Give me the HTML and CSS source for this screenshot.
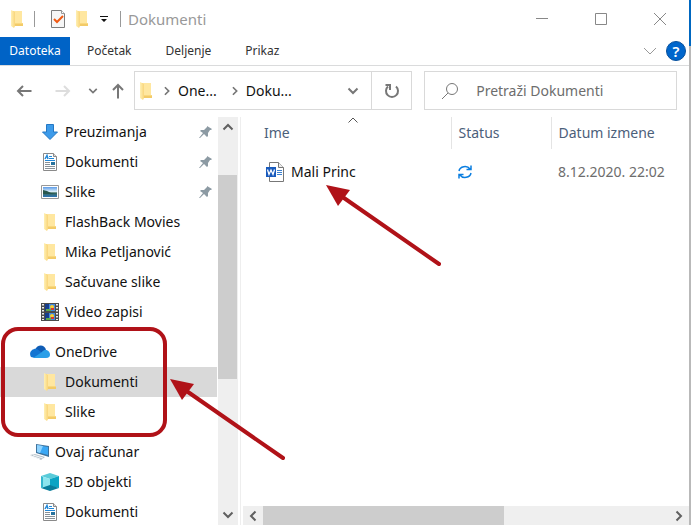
FILE: index.html
```html
<!DOCTYPE html>
<html lang="sr-Latn">
<head>
<meta charset="utf-8">
<meta name="viewport" content="width=device-width, initial-scale=1">
<title>Dokumenti</title>
<link rel="stylesheet" href="styles.css">
</head>
<body>
<svg class="sprite" aria-hidden="true">
  <defs>
    <linearGradient id="gold" x2="1" y2="0"><stop stop-color="#fff0b4"/><stop offset="1" stop-color="#f9d57a"/></linearGradient>
    <linearGradient id="sky" x2="0" y2="1"><stop stop-color="#5b9be8"/><stop offset=".45" stop-color="#d8ecf8"/><stop offset=".6" stop-color="#3c6b5c"/><stop offset="1" stop-color="#2b75b9"/></linearGradient>
  </defs>
  <symbol id="folder" viewBox="0 0 18 18"><path fill="#f9d87f" d="M4 1h10v12h1v3H5z"/><path fill="#ffe7a0" d="M6 1h8v12H6z"/><path fill="url(#gold)" d="M3 0l4 2v14l-1 2-3-2z"/><path fill="#f3cb68" d="M7 14h8v2H7z"/></symbol>
  <symbol id="down" viewBox="0 0 18 18"><path fill="#3d9bea" stroke="#2578c4" d="M5.500 1.500h7V9h4L9 16.500 1.500 9h4z"/></symbol>
  <symbol id="doc" viewBox="0 0 18 18"><path fill="#fff" stroke="#8a8a8a" d="M2.500.5h10l3 3v14h-13z"/><path fill="#ddd" stroke="#8a8a8a" d="M12.500.5v3h3"/><path stroke="#2188d8" d="M8 3.500h3M8 5.500h5M4 7.500h10" fill="none"/><path stroke="#2188d8" stroke-width="1.500" fill="none" d="M4 6l2-3.500L7 6"/><path stroke="#879198" d="M4 9.500h5M4 11.500h5M4 13.500h10M4 15.500h10"/><path fill="#28739d" d="M10 9h4v3h-4z"/></symbol>
  <symbol id="picture" viewBox="0 0 18 18"><path fill="#fff" stroke="#989898" d="M.5 2.500h17v13H.5z"/><path fill="url(#sky)" d="M2 4h14v10H2z"/><path fill="#28574d" d="M2 7l4 1 4 2 6 1H2z"/></symbol>
  <symbol id="film" viewBox="0 0 18 18"><path fill="#4b4b4b" d="M0 0h18v18H0z"/><path fill="#4289dd" d="M4 1h10v7H4zM4 10h10v7H4z"/><path fill="#163d8c" d="M4 1h4v7H4zM4 10h4v7H4z"/><circle cx="11" cy="4" r="2" fill="#f7ce31"/><circle cx="11" cy="13" r="2" fill="#f7ce31"/><path fill="#d23a30" d="M10 5h3v2h-3zM10 14h3v2h-3z"/><path fill="#5eab4b" d="M5 6h5v2H5zM5 15h5v2H5z"/><path stroke="#eee" stroke-width="2" stroke-dasharray="1.500 1.500" d="M2 1v16M16 1v16"/></symbol>
  <symbol id="cloud" viewBox="0 0 20 14"><path fill="#0f5cb5" d="M5 5C7-.5 14-1 16 4.500L11 9z"/><path fill="#1475d2" d="M1 12C-2 7 3 3 7 4l8 6-10 3z"/><path fill="#2b9fe8" d="M3 13l9-6c3-4 8-1 8 2.500 0 2-1 3.500-4 3.500z"/></symbol>
  <symbol id="pc" viewBox="0 0 20 18"><path fill="#3f739d" d="M6 1l13 2v11L6 10z"/><path fill="#3ba8f5" d="M7 2l11 2v8L7 9z"/><path fill="#8fd3ff" d="M7 2l6 1-3 7-3-1z"/><path fill="#b9c3cb" d="M0 12l5-1 10 3-4 3z"/><path stroke="#f4f7f9" d="M3 12l10 3M1 13l9 3"/></symbol>
  <symbol id="cube" viewBox="0 0 18 18"><path fill="#59cbd9" d="M9 0l9 3-9 3-9-3z"/><path fill="#8ce5ee" d="M0 3l9 3v8l-9 1z"/><path fill="#0aa4c4" d="M9 6l9-3v12l-9-2z"/><path fill="#087e9c" d="M0 15l9-3 9 3-9 3z"/><path fill="#35b7cf" d="M0 3l2 1v10l-2 1z"/></symbol>
  <symbol id="pin" viewBox="0 0 14 14"><path fill="#8c9aa3" d="M8 1l5 3-1 1-1 0-2 3 0 3-1 1-3-3-4 4-1 0 4-5-3-2 1-1 3 0 3-3z"/></symbol>
  <symbol id="v" viewBox="0 0 12 12"><path fill="none" stroke="currentColor" stroke-width="2" d="M1.500 3.500L6 8l4.500-4.500"/></symbol>
  <symbol id="thin" viewBox="0 0 14 14"><path fill="none" stroke="currentColor" d="M1 4l6 6 6-6"/></symbol>
  <symbol id="arrow" viewBox="0 0 16 16"><path fill="none" stroke="currentColor" stroke-width="2" d="M15.500 8H2M7 3L2 8l5 5"/></symbol>
</svg>

<div class="screen">
<div class="window">
  <header class="title">
    <svg class="i18"><use href="#folder"/></svg><span class="bar bar-first"></span>
    <button class="plain" aria-label="Svojstva"><svg class="i18" viewBox="0 0 18 18"><path fill="#f6f6f6" stroke="#7d7d7d" d="M2.500.5h10l3 3v14h-13z"/><path fill="#fff" stroke="#999" d="M12.500.5v3h3"/><path fill="none" stroke="#f05a14" stroke-width="2" d="M5 9l3 3 6-6"/></svg></button>
    <button class="plain new" aria-label="Nova fascikla"><svg class="i18"><use href="#folder"/></svg></button>
    <button class="plain drop" aria-label="Prilagodi"><svg width="8" height="8" viewBox="0 0 8 8"><path fill="#111" d="M0 1h8v1H0zM1 4h6L4 7z"/></svg></button>
    <span class="bar bar-last"></span><h1>Dokumenti</h1>
    <div class="controls">
      <button aria-label="Umanji"><svg width="14" height="14" viewBox="0 0 14 14"><path stroke="currentColor" d="M1 6.500h12"/></svg></button>
      <button aria-label="Uvećaj"><svg width="14" height="14" viewBox="0 0 14 14"><path fill="none" stroke="currentColor" d="M1.500 1.500h11v11h-11z"/></svg></button>
      <button aria-label="Zatvori"><svg width="14" height="14" viewBox="0 0 14 14"><path stroke="currentColor" d="M1 1l12 12M13 1L1 13"/></svg></button>
    </div>
  </header>
  <nav class="ribbon">
    <button class="active">Datoteka</button><button>Početak</button><button>Deljenje</button><button>Prikaz</button>
    <button class="expand" aria-label="Razvij traku"><svg width="14" height="14"><use href="#thin"/></svg></button>
    <button class="help" aria-label="Pomoć">?</button>
  </nav>
  <div class="nav">
    <div class="history">
      <button aria-label="Nazad"><svg width="16" height="16"><use href="#arrow"/></svg></button>
      <button class="off" aria-label="Napred"><svg class="flip" width="16" height="16"><use href="#arrow"/></svg></button>
      <button class="recent" aria-label="Nedavno"><svg width="10" height="10"><use href="#v"/></svg></button>
      <button class="up" aria-label="Nagore"><svg class="turn" width="16" height="16"><use href="#arrow"/></svg></button>
    </div>
    <div class="address">
      <svg class="i18"><use href="#folder"/></svg>
      <svg class="right" width="10" height="10"><use href="#v"/></svg><a href="#od">One...</a>
      <svg class="right" width="10" height="10"><use href="#v"/></svg><a href="#dok">Doku...</a>
      <button class="open" aria-label="Prethodne lokacije"><svg width="12" height="12"><use href="#v"/></svg></button>
      <button class="refresh" aria-label="Osveži"><svg width="16" height="16" viewBox="0 0 16 16"><path fill="none" stroke="currentColor" stroke-width="2" d="M12 3.500A6 6 0 1 1 4 3.500M1.500 2H6v5"/></svg></button>
    </div>
    <label class="search"><svg width="18" height="18" viewBox="0 0 18 18"><circle cx="11" cy="7" r="5.500" fill="none" stroke="currentColor"/><path stroke="currentColor" d="M7 11l-6 6"/></svg><input type="text" placeholder="Pretraži Dokumenti" aria-label="Pretraži Dokumenti"></label>
  </div>
  <div class="body">
    <aside>
      <ul>
        <li><svg class="i18"><use href="#down"/></svg><a href="#a">Preuzimanja</a><svg class="pin"><use href="#pin"/></svg></li>
        <li><svg class="i18"><use href="#doc"/></svg><a href="#b">Dokumenti</a><svg class="pin"><use href="#pin"/></svg></li>
        <li><svg class="i18"><use href="#picture"/></svg><a href="#c">Slike</a><svg class="pin"><use href="#pin"/></svg></li>
        <li><svg class="i18"><use href="#folder"/></svg><a href="#d">FlashBack Movies</a></li>
        <li><svg class="i18"><use href="#folder"/></svg><a href="#e">Mika Petljanović</a></li>
        <li><svg class="i18"><use href="#folder"/></svg><a href="#f">Sačuvane slike</a></li>
        <li><svg class="i18"><use href="#film"/></svg><a href="#g">Video zapisi</a></li>
      </ul>
      <ul class="marked">
        <li class="root"><svg class="cloud"><use href="#cloud"/></svg><a href="#od">OneDrive</a></li>
        <li class="selected"><svg class="i18"><use href="#folder"/></svg><a href="#dok">Dokumenti</a></li>
        <li><svg class="i18"><use href="#folder"/></svg><a href="#h">Slike</a></li>
      </ul>
      <ul>
        <li class="root"><svg class="pc"><use href="#pc"/></svg><a href="#i">Ovaj računar</a></li>
        <li><svg class="i18"><use href="#cube"/></svg><a href="#j">3D objekti</a></li>
        <li><svg class="i18"><use href="#doc"/></svg><a href="#k">Dokumenti</a></li>
      </ul>
    </aside>
    <div class="scroll vertical">
      <button aria-label="Pomeri nagore"><svg class="half" width="12" height="12"><use href="#v"/></svg></button>
      <span class="before"></span><span class="thumb"></span><span class="after"></span>
      <button aria-label="Pomeri nadole"><svg width="12" height="12"><use href="#v"/></svg></button>
    </div>
    <main>
      <table>
        <thead><tr><th class="name">Ime<svg class="sort" width="12" height="7" viewBox="0 0 12 7"><path fill="none" stroke="#555" d="M1.500 5.500L6 1l4.500 4.500"/></svg></th><th class="status">Status</th><th>Datum izmene</th></tr></thead>
        <tbody><tr>
          <td class="name"><div class="file"><svg width="18" height="20" viewBox="0 0 18 20"><path fill="#fff" stroke="#777" d="M3.500.5h9l5 5v14h-14z"/><path fill="#eee" stroke="#777" d="M12.500.5v5h5"/><path stroke="#3c80cf" d="M11 8.500h5M11 10.500h5M11 12.500h5"/><path fill="#185abd" d="M0 5h10v10H0z"/><path fill="none" stroke="#fff" stroke-width="1.300" d="M1.500 7.500l1.500 5 2-4.500 2 4.500 1.500-5"/></svg>Mali Princ</div></td>
          <td class="status"><svg width="14" height="14" viewBox="0 0 14 14" role="img" aria-label="Sinhronizacija"><path fill="none" stroke="#0a7ee0" stroke-width="1.500" d="M1 6a6 5.300 0 0 1 11-2M13 8a6 5.300 0 0 1-11 2M13 .5v4H8.500M1 13.500v-4h4.500"/></svg></td>
          <td class="date">8.12.2020. 22:02</td>
        </tr></tbody>
      </table>
      <svg class="pointer pointer-file" viewBox="0 0 115 82"><path d="M113 79L18 13"/><path class="head" d="M0 0l24 5-12 16z"/></svg>
      <div class="scroll horizontal">
        <button aria-label="Pomeri nalevo"><svg class="left" width="12" height="12"><use href="#v"/></svg></button>
        <span class="thumb"></span><span class="after"></span>
        <button aria-label="Pomeri nadesno"><svg class="right" width="12" height="12"><use href="#v"/></svg></button>
      </div>
    </main>
    <svg class="pointer pointer-folder" viewBox="0 0 115 82"><path d="M113 79L18 13"/><path class="head" d="M0 0l24 5-12 16z"/></svg>
  </div>
</div>
<div class="behind"></div>
</div>
</body>
</html>
```
FILE: styles.css
```css
* { box-sizing: border-box; }
body { margin: 0; background: #fff; color: #111; font: 14px/20px "Noto Sans", "Open Sans", sans-serif; }
button { font: inherit; color: inherit; background: none; border: 0; padding: 0; display: flex; align-items: center; justify-content: center; }
a { color: inherit; text-decoration: none; }
svg { display: block; flex: none; }
.sprite { position: absolute; width: 0; height: 0; }
.i18 { width: 18px; height: 18px; }
.flip { transform: scaleX(-1); }
.turn { transform: rotate(90deg); }
.half { transform: rotate(180deg); }
.right { transform: rotate(-90deg); }
.left { transform: rotate(90deg); }

.screen { display: flex; height: 100vh; overflow: hidden; }
.window { flex: 1; min-width: 0; display: flex; flex-direction: column; }
.behind { width: 2px; background: linear-gradient(#0067c0 46px, #b9b9b9 46px); }

.title { display: flex; align-items: center; height: 37px; padding-left: 8px; }
.bar { width: 1px; height: 16px; background: #999; }
.bar-first { margin: 0 14px 0 8px; }
.new { margin-left: 6px; }
.drop { margin: 0 12px 0 9px; }
.title h1 { margin: 0 0 0 7px; font-size: 15px; font-weight: 400; color: #999; }
.controls { display: flex; align-self: stretch; margin-left: auto; color: #888; }
.controls button { width: 59px; }

.ribbon { display: flex; height: 29px; border-bottom: 1px solid #dadbdc; font-size: 12px; color: #333; padding-right: 3px; }
.ribbon button { padding: 0 17px; }
.ribbon .active { background: #0063c6; color: #fff; width: 70px; height: 28px; padding: 0; }
.ribbon .expand { margin-left: auto; padding: 0 9px; color: #999; }
.ribbon .help { width: 20px; height: 20px; padding: 0; margin-top: 4px; border: 1px solid #07509c; border-radius: 50%; background: #0066cc; color: #fff; font-size: 15px; font-weight: 600; }

.nav { display: flex; align-items: center; height: 51px; padding-right: 12px; padding-bottom: 2px; }
.history { display: flex; width: 134px; padding-left: 16px; color: #777; }
.history .off { color: #ddd; margin-left: 23px; }
.history .recent { margin-left: 17px; }
.history .up { margin-left: 12px; }
.address { flex: 286; display: flex; align-items: center; height: 39px; border: 1px solid #d9d9d9; color: #777; padding-left: 2px; min-width: 0; }
.address a { color: #111; margin: 0 6px; }
.address > .right { margin-left: 7px; }
.address .open { margin-left: auto; width: 37px; }
.address .refresh { width: 40px; align-self: stretch; border-left: 1px solid #d9d9d9; }
.search { flex: 245; display: flex; align-items: center; gap: 17px; margin-left: 12px; height: 39px; padding-left: 16px; border: 1px solid #d9d9d9; color: #777; min-width: 0; }
.search input { flex: 1; min-width: 0; border: 0; padding: 0; outline: 0; font: inherit; background: none; }
.search input::placeholder { color: #6d6d6d; opacity: 1; }

.body { position: relative; flex: 1; display: flex; min-height: 0; }
aside { width: 217px; overflow: hidden; }
ul { list-style: none; margin: 0 0 10px; padding: 0; }
li { display: flex; align-items: center; gap: 6px; height: 30px; padding: 0 4px 0 41px; }
li.root { padding-left: 30px; gap: 5px; }
.selected { background: #d9d9d9; }
.cloud { width: 20px; height: 14px; }
.pc { width: 20px; height: 18px; }
.pin { width: 14px; height: 14px; margin-left: auto; }
.marked { position: relative; }
.marked::after { content: ""; position: absolute; left: 1px; right: 50px; top: -10px; bottom: -10px; border: 4px solid #b01218; border-radius: 17px; }

.scroll { display: flex; background: #efefef; color: #606060; }
.thumb { background: #cdcdcd; }
.vertical { flex-direction: column; width: 20px; margin-left: 1px; padding-right: 1px; }
.vertical button, .horizontal button { flex: 0 0 20px; }
.vertical .before { flex: 38; }
.vertical .thumb { flex: 204; }
.vertical .after { flex: 126; }
.horizontal { height: 19px; margin: auto 0 0 2px; }
.horizontal .thumb { flex: 240; }
.horizontal .after { flex: 164; }

main { position: relative; flex: 1; min-width: 0; display: flex; flex-direction: column; margin-left: 2px; border-left: 1px solid #eee; }
table { width: 100%; border-collapse: collapse; table-layout: fixed; }
th { position: relative; height: 32px; padding: 0 0 0 7px; text-align: left; font-weight: 400; color: #4c607a; border-right: 1px solid #e4e4e4; }
th:last-child { border-right: 0; }
td { height: 30px; padding: 0 0 0 7px; }
tbody::before { content: ""; display: block; height: 8px; }
.name { width: 210px; }
th.name { padding-left: 23px; }
td.name { padding-left: 25px; }
.status { width: 100px; }
.file { display: flex; align-items: center; gap: 7px; }
.date { color: #6d6d6d; }
.sort { position: absolute; top: 0; left: calc(50% + 1px); }

.pointer { position: absolute; width: 115px; height: 82px; fill: none; stroke: #b01218; stroke-width: 4px; stroke-linecap: round; }
.pointer .head { fill: #b01218; stroke: none; }
.pointer-file { left: 85px; top: 68px; }
.pointer-folder { left: 170px; top: 262px; }
```
